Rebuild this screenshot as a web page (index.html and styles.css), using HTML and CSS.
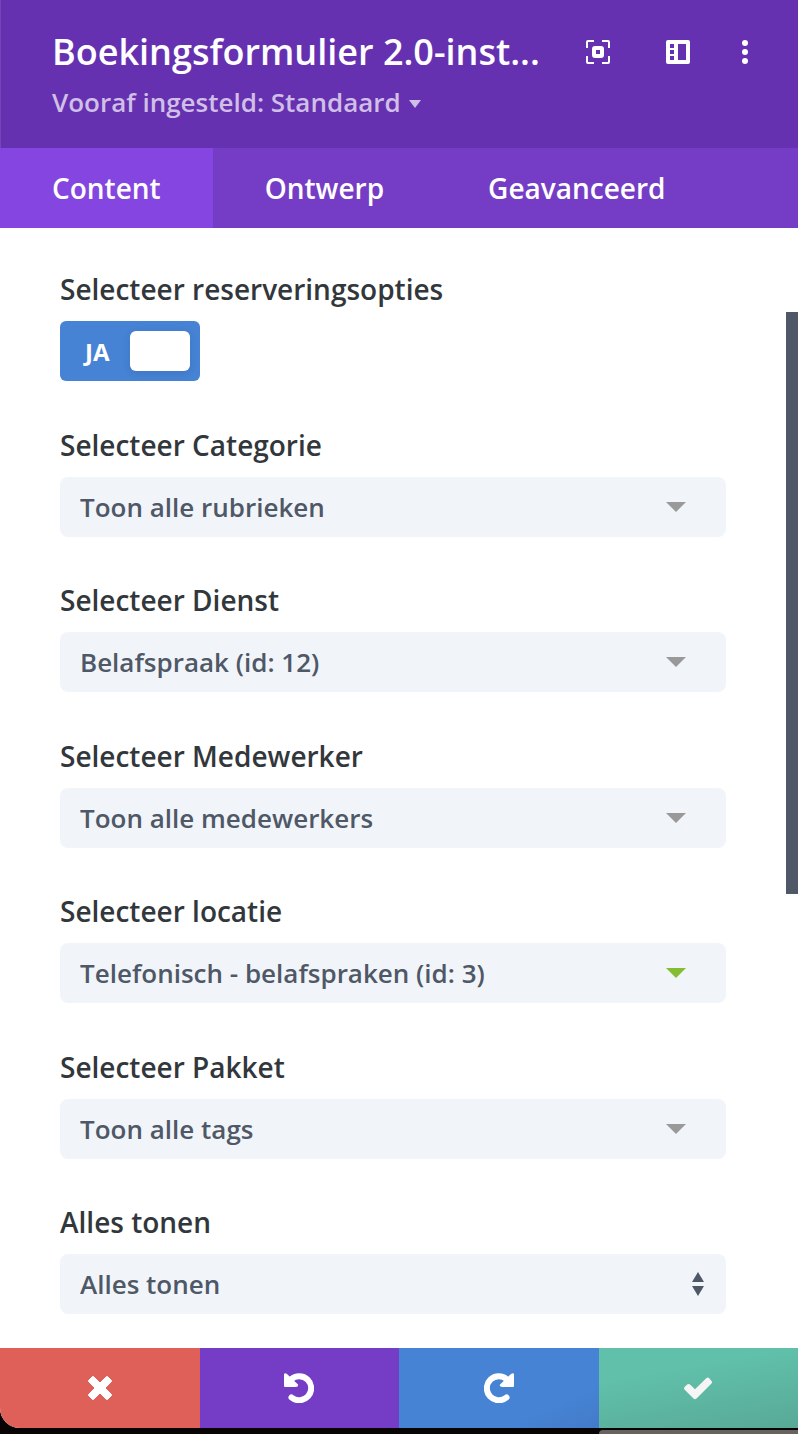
FILE: index.html
```html
<!DOCTYPE html>
<html lang="nl">
<head>
    <meta charset="UTF-8">
    <meta name="viewport" content="width=device-width, initial-scale=1.0">
    <title>Boekingsformulier 2.0</title>
    <link rel="stylesheet" href="styles.css">
</head>
<body>
    <div class="modal">
        <header class="modal-header">
            <div class="header-text">
                <h1>Boekingsformulier 2.0-inst...</h1>
                <button type="button" class="preset">Vooraf ingesteld: Standaard</button>
            </div>
            <div class="header-actions">
                <button type="button" class="icon-button" aria-label="Uitvouwen">
                    <svg width="24" height="24" viewBox="0 0 24 24" fill="none" stroke="#fff">
                        <path d="M1 8V2Q1 1 2 1H8M16 1H22Q23 1 23 2V8M23 16V22Q23 23 22 23H16M8 23H2Q1 23 1 22V16" stroke-width="2"/>
                        <rect x="8" y="8" width="8" height="8" rx="1" stroke-width="4"/>
                    </svg>
                </button>
                <button type="button" class="icon-button" aria-label="Zijbalk">
                    <svg width="24" height="24" viewBox="0 0 24 24" fill="#fff">
                        <path fill-rule="evenodd" d="M2 0H22Q24 0 24 2V22Q24 24 22 24H2Q0 24 0 22V2Q0 0 2 0ZM4 4V8H8V4ZM4 10V14H8V10ZM4 16V20H8V16ZM12 4V20H20V4Z"/>
                    </svg>
                </button>
                <button type="button" class="icon-button" aria-label="Meer">
                    <svg width="6" height="24" viewBox="0 0 6 24" fill="#fff">
                        <circle cx="3" cy="3" r="3"/>
                        <circle cx="3" cy="12" r="3"/>
                        <circle cx="3" cy="21" r="3"/>
                    </svg>
                </button>
            </div>
        </header>

        <nav class="tabs">
            <a href="#content" class="active">Content</a>
            <a href="#ontwerp">Ontwerp</a>
            <a href="#geavanceerd">Geavanceerd</a>
        </nav>

        <form class="options" id="content">
            <div class="field">
                <label for="opties">Selecteer reserveringsopties</label>
                <div class="toggle">
                    <input type="checkbox" id="opties" checked>
                    <span class="toggle-text">JA</span>
                    <span class="toggle-knob"></span>
                </div>
            </div>
            <div class="field">
                <label for="categorie">Selecteer Categorie</label>
                <div class="select">
                    <select id="categorie"><option>Toon alle rubrieken</option></select>
                </div>
            </div>
            <div class="field">
                <label for="dienst">Selecteer Dienst</label>
                <div class="select">
                    <select id="dienst"><option>Belafspraak (id: 12)</option></select>
                </div>
            </div>
            <div class="field">
                <label for="medewerker">Selecteer Medewerker</label>
                <div class="select">
                    <select id="medewerker"><option>Toon alle medewerkers</option></select>
                </div>
            </div>
            <div class="field">
                <label for="locatie">Selecteer locatie</label>
                <div class="select changed">
                    <select id="locatie"><option>Telefonisch - belafspraken (id: 3)</option></select>
                </div>
            </div>
            <div class="field">
                <label for="pakket">Selecteer Pakket</label>
                <div class="select">
                    <select id="pakket"><option>Toon alle tags</option></select>
                </div>
            </div>
            <div class="field">
                <label for="tonen">Alles tonen</label>
                <div class="select updown">
                    <select id="tonen"><option>Alles tonen</option></select>
                </div>
            </div>
            <div class="scrollbar"></div>
        </form>

        <footer class="modal-footer">
            <button type="button" class="cancel" aria-label="Annuleren">
                <svg width="24" height="24" viewBox="0 0 24 24">
                    <path d="M4 1Q5 0 6 1L12 7L18 1Q19 0 20 1L23 4Q24 5 23 6L17 12L23 18Q24 19 23 20L20 23Q19 24 18 23L12 17L6 23Q5 24 4 23L1 20Q0 19 1 18L7 12L1 6Q0 5 1 4Z" fill="#fff" stroke="#fff"/>
                </svg>
            </button>
            <button type="button" class="undo" aria-label="Ongedaan maken">
                <svg width="30" height="30" viewBox="0 0 30 30">
                    <path d="M7 6.500A12 12 0 1 1 7.500 24.500" fill="none" stroke="#fff" stroke-width="6" stroke-linecap="round"/>
                    <path d="M0 1Q1 -.5 3 1L14 11.500Q14.500 14 12 14H1Q0 14 0 13Z" fill="#fff"/>
                </svg>
            </button>
            <button type="button" class="redo" aria-label="Opnieuw">
                <svg width="30" height="30" viewBox="0 0 30 30">
                    <g transform="matrix(-1 0 0 1 30 0)">
                        <path d="M7 6.500A12 12 0 1 1 7.500 24.500" fill="none" stroke="#fff" stroke-width="6" stroke-linecap="round"/>
                        <path d="M0 1Q1 -.5 3 1L14 11.500Q14.500 14 12 14H1Q0 14 0 13Z" fill="#fff"/>
                    </g>
                </svg>
            </button>
            <button type="button" class="save" aria-label="Opslaan">
                <svg width="28" height="24" viewBox="0 0 28 24">
                    <path d="M0 12.500Q0 11.500 1 10.500L3.500 8.200Q5 7.500 6 8.500L11 13.200L22.500 2Q24 1 25 2L27.500 5Q28.500 6 27.500 7.500L12.500 22.500Q11 24 9.500 22.500L1 14Q0 13.200 0 12.500Z" fill="#f5f5f5"/>
                </svg>
            </button>
        </footer>
    </div>
    <div class="backdrop"></div>
</body>
</html>
```

FILE: styles.css
```css
* {
    box-sizing: border-box;
}

body {
    margin: 0;
    min-height: 100vh;
    display: flex;
    flex-direction: column;
    background: #080403;
    font-family: "Open Sans", sans-serif;
    font-weight: 600;
    color: #32373c;
}

button,
select {
    font-family: inherit;
    font-weight: inherit;
    border: none;
    cursor: pointer;
}

.modal {
    flex: 1;
    display: flex;
    flex-direction: column;
    background: #fff;
    border-radius: 0 0 0 20px;
    overflow: hidden;
}

/* Header */
.modal-header {
    display: flex;
    justify-content: space-between;
    height: 148px;
    padding: 28px 50px 0 52px;
    background: #6631b0;
    box-shadow: inset 1px 0 rgba(255, 255, 255, 0.1);
}

.modal-header h1 {
    margin: 0;
    font-size: 36px;
    line-height: 48px;
    font-weight: 600;
    color: #fff;
    white-space: nowrap;
}

.preset {
    display: flex;
    align-items: center;
    gap: 8px;
    margin-top: 8px;
    padding: 0;
    background: none;
    font-size: 26px;
    line-height: 36px;
    color: #d0bfe6;
}

.preset::after {
    content: "";
    margin-top: 4px;
    border: 6px solid transparent;
    border-top: 8px solid #d0bfe6;
    border-bottom: none;
}

.header-actions {
    display: flex;
    gap: 56px;
    height: 48px;
}

.header-actions .icon-button:last-child {
    margin-left: -4px;
}

.icon-button {
    display: flex;
    align-items: center;
    padding: 0;
    background: none;
}

/* Tabs */
.tabs {
    display: flex;
    height: 80px;
    background: #753dc5;
}

.tabs a {
    padding: 0 52px;
    font-size: 28px;
    line-height: 80px;
    color: #fff;
    text-decoration: none;
}

.tabs a.active {
    background: #8445e0;
}

/* Options */
.options {
    position: relative;
    flex: 1;
    display: flex;
    flex-direction: column;
    justify-content: space-between;
    padding: 42px 72px 34px 60px;
}

.field label {
    display: block;
    margin-bottom: 13px;
    font-size: 28px;
    line-height: 38px;
}

.toggle {
    position: relative;
    display: flex;
    align-items: center;
    justify-content: space-between;
    width: 140px;
    height: 60px;
    padding: 0 10px 0 25px;
    border-radius: 6px;
    background: #4683d4;
}

.toggle input {
    position: absolute;
    inset: 0;
    width: 100%;
    height: 100%;
    margin: 0;
    opacity: 0;
    cursor: pointer;
}

.toggle-text {
    font-size: 24px;
    font-weight: 700;
    color: #fff;
}

.toggle-knob {
    width: 60px;
    height: 40px;
    border-radius: 6px;
    background: #fff;
    box-shadow: 0 2px 8px rgba(0, 0, 0, 0.1);
}

.select {
    position: relative;
}

.select select {
    display: block;
    width: 100%;
    height: 60px;
    padding: 0 80px 0 20px;
    border-radius: 8px;
    background: #f1f5fa;
    font-size: 26px;
    color: #4f5866;
    appearance: none;
}

.select::after {
    content: "";
    position: absolute;
    top: 25px;
    right: 40px;
    border: 10px solid transparent;
    border-top-color: #999;
    border-bottom: none;
    pointer-events: none;
}

.select.changed::after {
    border-top-color: #84bd34;
}

.select.updown::before,
.select.updown::after {
    content: "";
    position: absolute;
    right: 22px;
    border: 6px solid transparent;
    pointer-events: none;
}

.select.updown::before {
    top: 18px;
    border-top: none;
    border-bottom: 10px solid #4f5866;
}

.select.updown::after {
    top: 32px;
    border-top: 10px solid #4f5866;
    border-bottom: none;
}

.scrollbar {
    position: absolute;
    top: 84px;
    right: 0;
    width: 12px;
    height: 52%;
    background: #4f5866;
}

/* Footer */
.modal-footer {
    display: grid;
    grid-template-columns: repeat(4, 1fr);
    height: 80px;
}

.modal-footer button {
    display: flex;
    align-items: center;
    justify-content: center;
    padding: 0;
}

.cancel {
    background: #df6059;
}

.undo {
    background: #753dc5;
}

.redo {
    background: linear-gradient(155deg, #4683d4 75%, #437bc8);
}

.save {
    background: linear-gradient(170deg, #60c0aa 30%, #58a997);
}

/* Page behind the modal */
.backdrop {
    height: 6px;
    padding-top: 2px;
}

.backdrop::after {
    content: "";
    display: block;
    height: 4px;
    margin-left: 75%;
    border-radius: 16px 0 0 0;
    background: #666260;
}
```
